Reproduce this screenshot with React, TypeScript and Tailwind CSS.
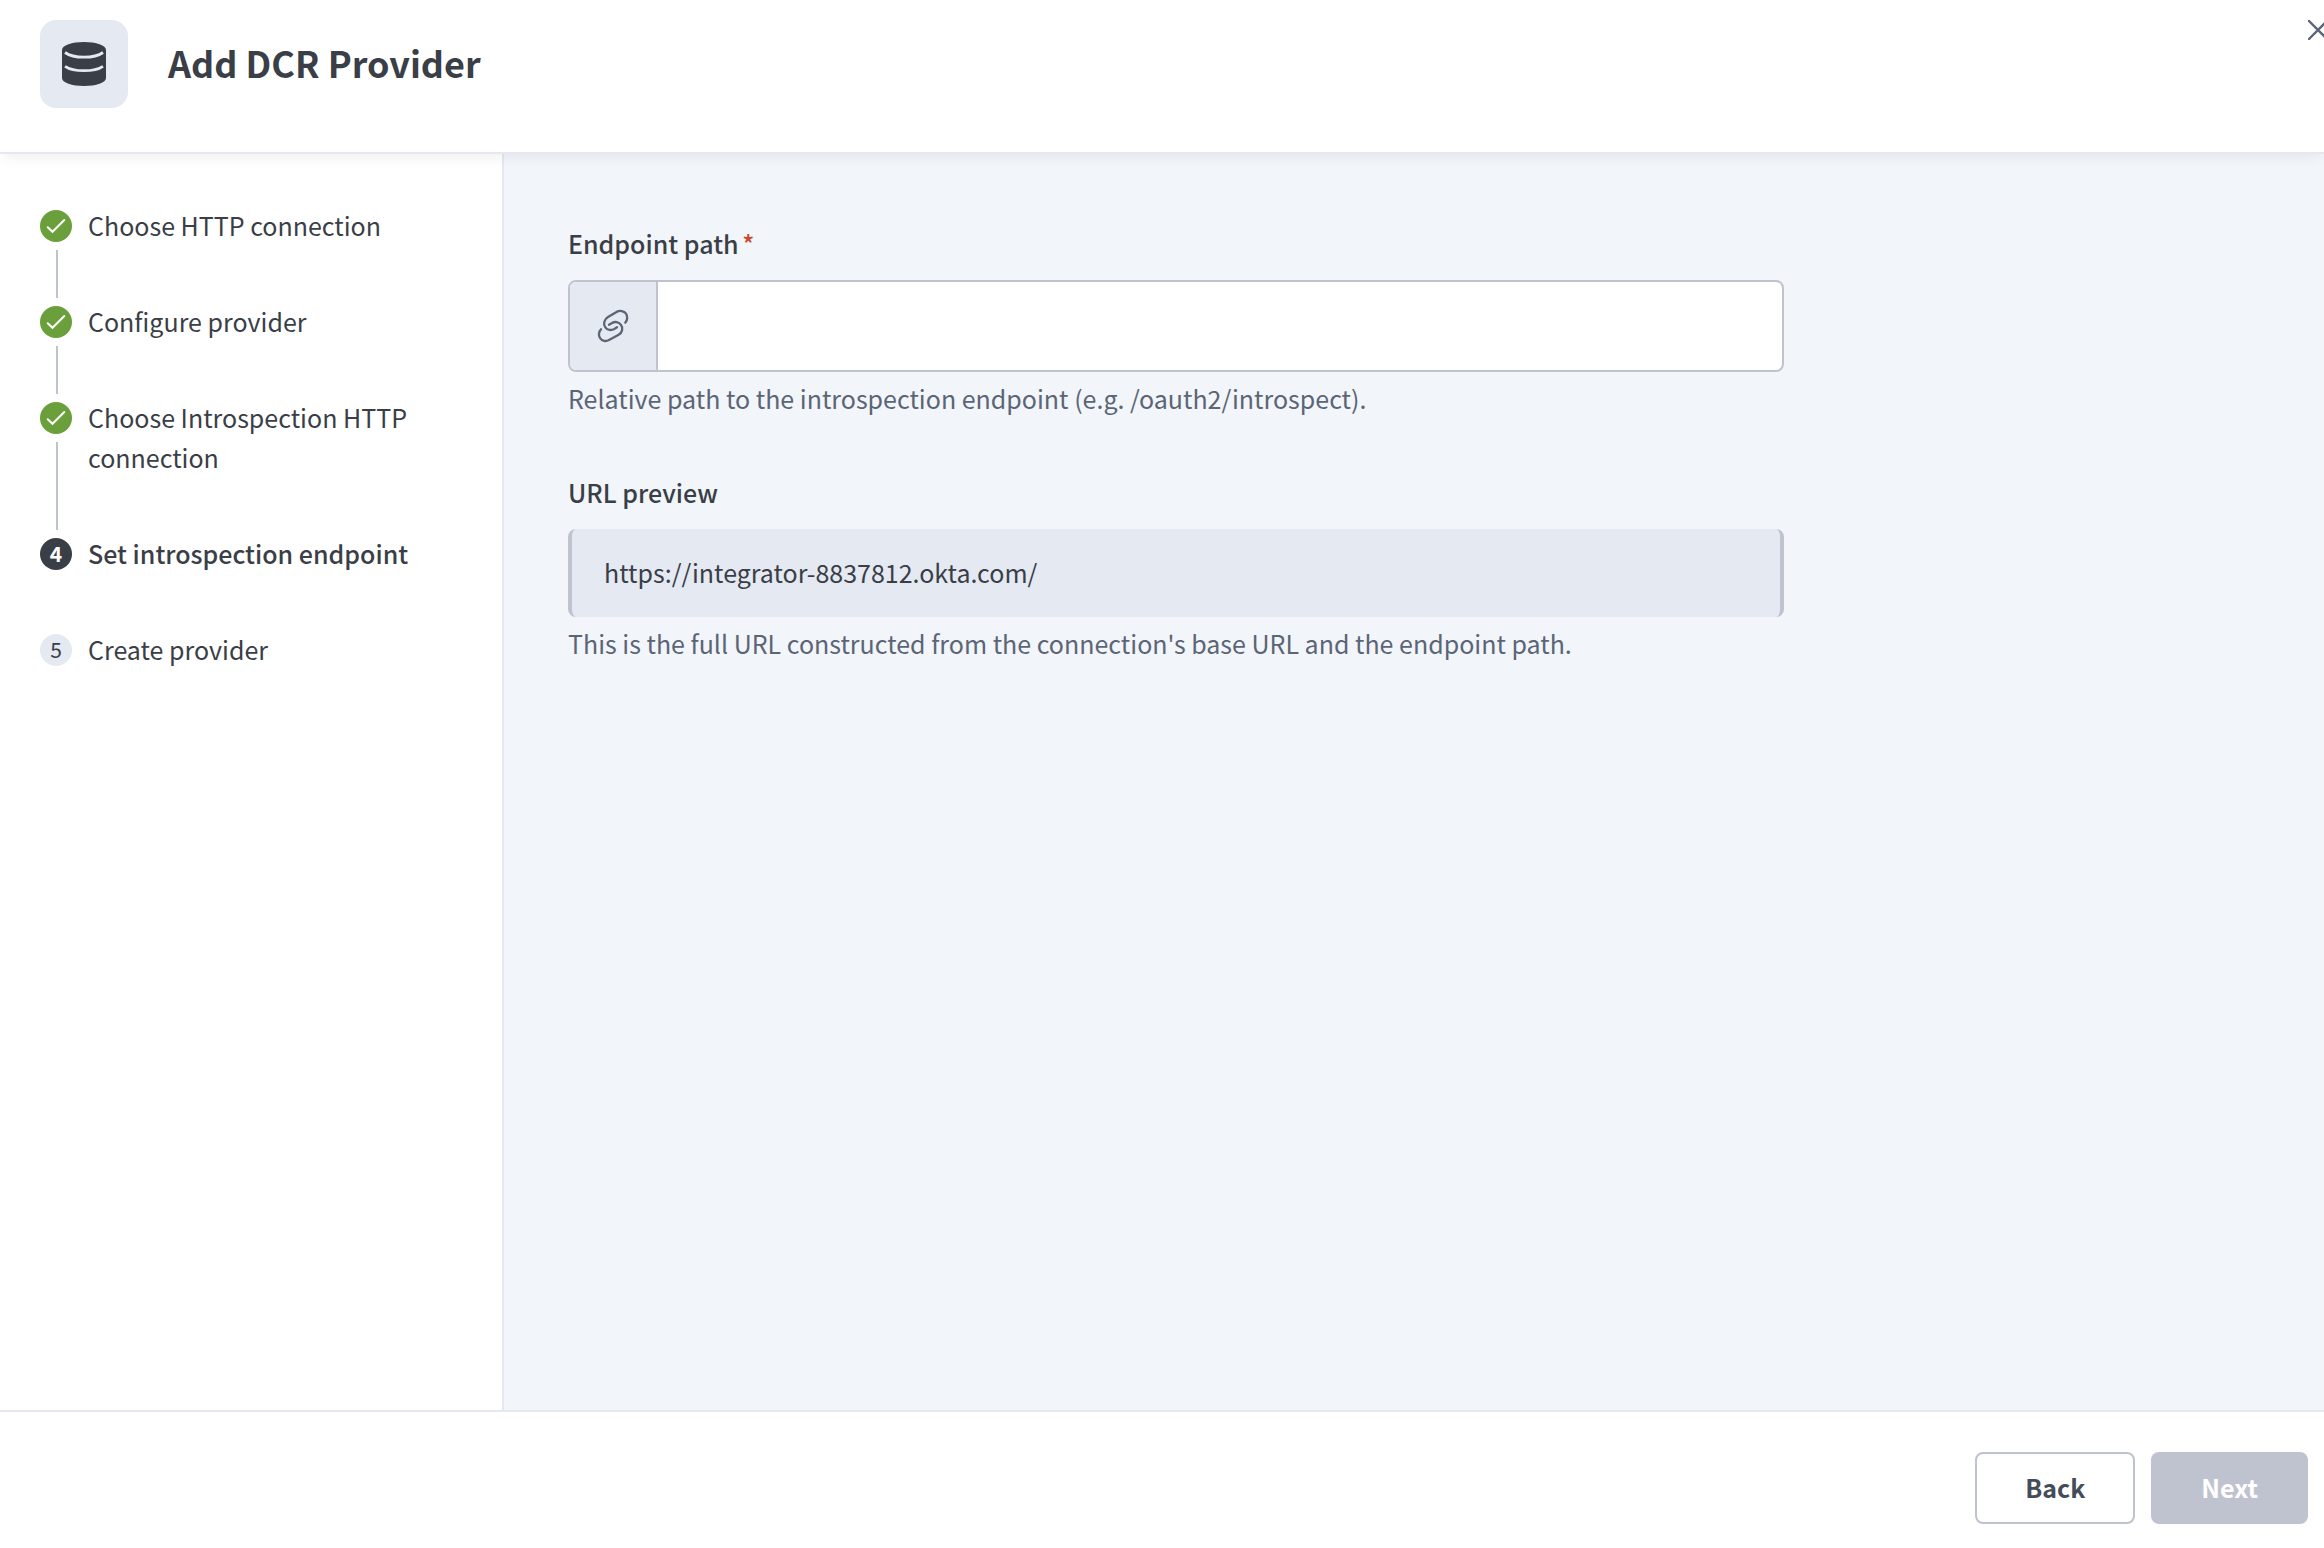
import { useState } from "react"
import clsx from "clsx"

const BASE_URL = "https://integrator-8837812.okta.com/"
const CURRENT_STEP = 4

const steps = [
  "Choose HTTP connection",
  "Configure provider",
  "Choose Introspection HTTP connection",
  "Set introspection endpoint",
  "Create provider",
]

function DatabaseIcon() {
  return (
    <svg viewBox="0 0 44 44" className="size-11" fill="none" aria-hidden="true">
      <path d="M0 8C0 3.4 9.8 0 22 0s22 3.4 22 8v28c0 4.6-9.8 8-22 8S0 40.6 0 36Z" fill="#3a3e47" />
      <path
        d="M3 10.5C7.5 13.8 14 15.2 22 15.2s14.5-1.4 19-4.7M3 24.3C7.5 27.4 14 28.7 22 28.7s14.5-1.3 19-4.4"
        stroke="#e5e9f2"
        strokeWidth="2.8"
      />
    </svg>
  )
}

function LinkIcon() {
  return (
    <svg
      viewBox="141 297 96 102"
      className="h-[34px] w-8"
      fill="none"
      stroke="#5b6576"
      strokeWidth="7"
      strokeLinecap="round"
      aria-hidden="true"
    >
      <path d="M226 338C233 331 233 318 228 311C222 302 209 301 201 305L174 321C162 328 159 343 166 352C172 361 184 362 193 357L201 352" />
      <path d="M153 358C146 365 145 377 150 384C156 394 168 395 177 390L206 374C217 368 220 354 213 345C207 335 194 334 186 339L177 344" />
    </svg>
  )
}

function CheckIcon() {
  return (
    <svg viewBox="0 0 32 32" className="size-8" fill="none" aria-hidden="true">
      <path d="m7.7 17.2 4.8 4.6L24.3 10" stroke="white" strokeWidth="2" strokeLinecap="round" />
    </svg>
  )
}

function StepMarker({ number }: { number: number }) {
  const done = number < CURRENT_STEP
  const active = number === CURRENT_STEP
  return (
    <span
      className={clsx(
        "flex size-8 shrink-0 items-center justify-center rounded-full text-[21px] leading-7",
        done && "bg-[#6b9f3c]",
        active && "bg-[#3a3e47] pb-0.5 font-bold text-white",
        !done && !active && "bg-[#e5e9f2] pb-0.5 text-[#3a3e47]"
      )}
    >
      {done ? <CheckIcon /> : number}
    </span>
  )
}

export default function App() {
  const [path, setPath] = useState("")

  return (
    <div className="flex min-h-screen flex-col overflow-hidden bg-white font-['Noto_Sans_CJK_SC',sans-serif] text-[25px] leading-10 text-[#3a3e47]">
      {/* Header */}
      <header className="z-10 flex items-start justify-between border-b-2 border-[#e5e9ef] bg-white pt-5 pb-11 pl-10 shadow-[0_6px_14px_-4px_rgba(0,0,0,0.08)]">
        <div className="flex items-center gap-10">
          <div className="flex size-22 items-center justify-center rounded-2xl bg-[#e5e9f2]">
            <DatabaseIcon />
          </div>
          <h1 className="pb-1 text-[36px] leading-12 font-bold">Add DCR Provider</h1>
        </div>
        {/* Overhangs the right edge of the dialog */}
        <button type="button" aria-label="Close" className="-mr-1">
          <svg viewBox="0 0 20 20" className="size-5" fill="none" aria-hidden="true">
            <path d="m1 1 18 18M19 1 1 19" stroke="#5b6576" strokeWidth="2.4" strokeLinecap="round" />
          </svg>
        </button>
      </header>

      <div className="flex flex-1">
        {/* Steps */}
        <nav aria-label="Progress" className="w-[504px] shrink-0 border-r-2 border-[#e5e9ef] pt-[51px] pr-16 pl-10">
          <ol>
            {steps.map((step, i) => (
              <li key={step} aria-current={i + 1 === CURRENT_STEP ? "step" : undefined} className="flex gap-4">
                <div className="flex flex-col items-center pt-[5px]">
                  <StepMarker number={i + 1} />
                  {i + 1 < CURRENT_STEP && <span className="mt-2 mb-[3px] ml-0.5 w-0.5 flex-1 bg-[#bfc3cf]" />}
                </div>
                <span className={clsx("pb-14", i + 1 === CURRENT_STEP && "font-medium")}>{step}</span>
              </li>
            ))}
          </ol>
        </nav>

        {/* Form */}
        <main className="flex-1 bg-[#f2f5fa] px-16 pt-[69px]">
          <form id="endpoint-form" className="flex max-w-[1216px] flex-col gap-[54px]">
            <div className="flex flex-col">
              <label htmlFor="endpoint-path" className="mb-[17px] font-medium">
                Endpoint path <span className="-ml-0.5 text-[#cd472a]">*</span>
              </label>
              <div className="flex h-23 overflow-hidden rounded-lg border-2 border-[#bfc3cf] bg-white">
                <span className="flex w-22 shrink-0 items-center justify-center border-r-2 border-[#bfc3cf] bg-[#e5e9f2]">
                  <LinkIcon />
                </span>
                <input
                  id="endpoint-path"
                  type="text"
                  required
                  aria-describedby="endpoint-help"
                  value={path}
                  onChange={(e) => setPath(e.target.value)}
                  className="min-w-0 flex-1 px-8 outline-none"
                />
              </div>
              <p id="endpoint-help" className="mt-1.5 text-[#5b6576]">
                Relative path to the introspection endpoint (e.g. /oauth2/introspect).
              </p>
            </div>

            <div className="flex flex-col">
              <label htmlFor="url-preview" className="mb-[17px] font-medium">
                URL preview
              </label>
              <input
                id="url-preview"
                type="text"
                readOnly
                aria-describedby="preview-help"
                value={BASE_URL + path.replace(/^\//, "")}
                className="h-22 rounded-lg border-x-4 border-[#bfc3cf] bg-[#e5e9f2] px-8 pb-0.5 outline-none"
              />
              <p id="preview-help" className="mt-1.5 text-[#5b6576]">
                This is the full URL constructed from the connection's base URL and the endpoint path.
              </p>
            </div>
          </form>
        </main>
      </div>

      {/* Footer */}
      <footer className="flex justify-end gap-4 border-t-2 border-[#e5e9ef] bg-white pt-10 pr-4 pb-6">
        <button type="button" className="h-18 rounded-lg border-2 border-[#bfc3cf] px-12 pb-0.5 font-bold text-[#454c59]">
          Back
        </button>
        <button
          type="submit"
          form="endpoint-form"
          disabled={!path}
          className="h-18 rounded-lg border-2 border-transparent bg-[#343a46] px-12 pb-0.5 font-bold text-white disabled:bg-[#bfc3cf]"
        >
          Next
        </button>
      </footer>
    </div>
  )
}
